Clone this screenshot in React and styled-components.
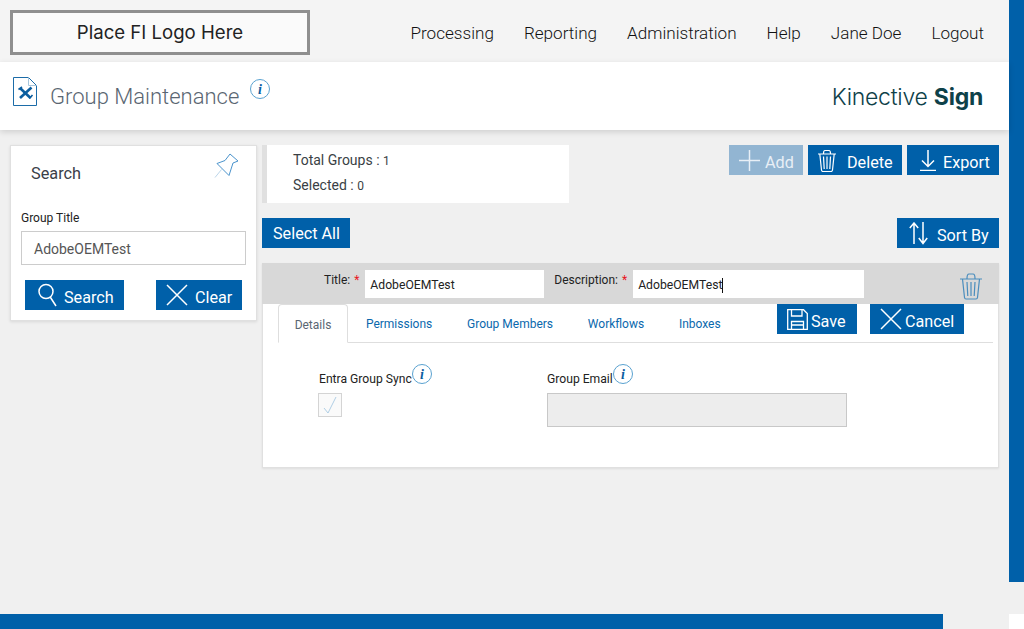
import React from "react";
import styled, { createGlobalStyle } from "styled-components";

const Global = createGlobalStyle`
  html, body { margin: 0; padding: 0; background: #f0f0f0; overflow: hidden; }
  body { font-family: Roboto, "Liberation Sans", sans-serif; }
  * { box-sizing: border-box; }
`;
const BLUE = "#0060a9";

const Page = styled.div`width: 1024px; height: 629px; display: flex; flex-direction: column;`;
const Upper = styled.div`height: 614px; display: flex; align-items: flex-start;`;
const Main = styled.div`width: 1009px; flex: none;`;
const ScrollV = styled.div`width: 15px; height: 582px; background: ${BLUE};`;
const Lower = styled.div`height: 15px; display: flex; justify-content: space-between;`;
const ScrollH = styled.div`width: 943px; background: ${BLUE};`;
const Corner = styled.div`width: 15px; background: #fff;`;

const TopBar = styled.header`height: 62px; background: #f4f4f4; display: flex; align-items: flex-start; justify-content: space-between; padding: 10px 25px 0 10px;`;
const Logo = styled.div`width: 300px; height: 45px; border: 3px solid #8f8f8f; background: #fafafa; display: flex; align-items: center; justify-content: center; font: 400 18.6px Inter, sans-serif; color: #222; padding-bottom: 1px;`;
const Nav = styled.nav`display: flex; gap: 30px; padding-top: 14px;`;
const NavItem = styled.a`font-size: 17.1px; font-weight: 300; line-height: 19px; color: #111;`;

const TitleBar = styled.div`height: 68px; background: #fff; box-shadow: 0 2px 6px rgba(0,0,0,.14); display: flex; justify-content: space-between; padding: 15px 26px 0 13px; position: relative;`;
const TitleLeft = styled.div`display: flex; align-items: flex-start;`;
const PageTitle = styled.h1`margin: 6px 11px 0 13px; font-size: 22px; line-height: 28px; font-weight: 300; color: #5a6672;`;
const Brand = styled.div`font: 300 23px/28px Inter, sans-serif; color: #0e4149; margin-top: 6px; letter-spacing: -.25px; b { font-weight: 700; }`;
const InfoWrap = styled.span`display: inline-flex; flex: none; margin-top: ${p => p.$top || 0}px;`;

const Content = styled.div`display: flex; gap: 5px; padding: 15px 10px 0;`;
const Side = styled.aside`width: 247px; height: 176px; flex: none; background: #fff; border: 1px solid #e0e0e0; box-shadow: 0 1px 3px rgba(0,0,0,.1); padding: 6px 10px 0;`;
const SideHead = styled.div`display: flex; justify-content: space-between; padding: 1px 6px 0 10px; height: 59px;`;
const SideTitle = styled.div`font-size: 16.3px; font-weight: 400; color: #3a4048; margin-top: 11px; line-height: 19px;`;
const Label = styled.label`display: block; font-size: 12px; line-height: 14px; color: #222;`;
const SearchInput = styled.div`width: 225px; height: 34px; margin-top: 6px; border: 1px solid #ccc; background: #fff; font-size: 14px; line-height: 34px; padding-left: 12px; color: #555;`;
const SideActions = styled.div`display: flex; justify-content: space-between; padding: 15px 4px 0;`;

const Btn = styled.button`height: 30px; border: 0; margin: 0; padding: 0 ${p => p.$pr || 10}px 0 ${p => p.$pl || 10}px; display: inline-flex; align-items: center; gap: ${p => p.$gap || 8}px; background: ${p => p.$off ? "#92b5d2" : BLUE}; color: ${p => p.$off ? "#e8eff6" : "#fff"}; font: 400 16.2px Roboto, sans-serif; width: ${p => p.$w}px; flex: none;
  span { position: relative; top: 2px; }`;
const PlainBtn = styled(Btn)`padding-left: 11px;`;

const Center = styled.main`width: 737px; flex: none;`;
const StatsRow = styled.div`display: flex; justify-content: space-between; align-items: flex-start;`;
const Stats = styled.div`width: 307px; height: 58px; background: #fff; border-left: 5px solid #e0e0e0; padding: 4px 0 0 26px; font-size: 14px; line-height: 23.6px; color: #3a3f45; b { font-weight: 400; font-size: 12px; }`;
const Actions = styled.div`display: flex; gap: 5px;`;
const SelectRow = styled.div`display: flex; justify-content: space-between; margin-top: 15px;`;

const Panel = styled.section`margin-top: 15px; height: 205px; background: #fff; border: 1px solid #e0e0e0; border-top: 0; box-shadow: 0 1px 2px rgba(0,0,0,.08);`;
const PanelHead = styled.div`height: 41px; background: #d8d8d8; display: flex; align-items: flex-start; padding: 7px 16px 0 62px; margin: 0 -1px 0 -1px;`;
const FieldLabel = styled.div`font-size: 12px; line-height: 14px; color: #222; margin-top: 3px; margin-right: 6px; white-space: nowrap; i { color: #e8141c; font-style: normal; margin-left: 1px; }`;
const HeadInput = styled.div`width: ${p => p.$w}px; height: 28px; background: #fff; font-size: 12.2px; line-height: 31px; padding-left: 5px; color: #222; margin-right: ${p => p.$mr}px; flex: none; display: flex;`;
const Caret = styled.span`width: 1px; height: 15px; background: #111; margin-top: 8px;`;
const TabRow = styled.div`height: 39px; margin: 0 5px 0 15px; border-bottom: 1px solid #dedede; display: flex; align-items: flex-start; justify-content: space-between;`;
const Tabs = styled.div`display: flex; height: 39px;`;
const Tab = styled.a`font-size: 12px; line-height: 14px; padding: 13px 17.4px 0; color: ${p => p.$on ? "#5a6672" : "#0a68ad"};
  ${p => p.$on && `background:#fff;border:1px solid #dedede;border-bottom:1px solid #fff;border-radius:4px 4px 0 0;height:39px;width:70px;padding:13px 0 0;text-align:center;margin-right:.5px;`}`;
const TabActions = styled.div`display: flex; gap: 13px; padding-right: 29px;`;
const Fields = styled.div`display: flex; padding: 21px 0 0 56px;`;
const SyncField = styled.div`width: 228px;`;
const FieldHead = styled.div`display: flex; align-items: flex-start; height: 29px; ${Label} { line-height: 14px; margin-top: 8px; font-size: 12.15px; }`;
const Check = styled.div`width: 24px; height: 24px; border: 1px solid #d4d4d4; background: #fafafa; display: flex; align-items: center; justify-content: center; margin-left: -1px;`;
const DisabledInput = styled.div`width: 300px; height: 34px; background: #ededed; border: 1px solid #c8c8c8;`;

const Info = ({ size = 20 }) => (
  <svg width={size} height={size} viewBox="0 0 20 20" fill="none">
    <circle cx="10" cy="10" r="9.5" stroke="#5aa2d0" strokeWidth="1" />
    <text x="10" y="14.5" textAnchor="middle" fontFamily="Liberation Serif, serif" fontStyle="italic" fontWeight="700" fontSize="14" fill="#0a5d9f">i</text>
  </svg>
);
const FileIcon = () => (
  <svg width="24" height="30" viewBox="0 0 24 30" fill="none" style={{ flex: "none" }}>
    <path d="M.5.5H15.5L23.5 8.5V28.5H.5Z" fill="#fff" stroke="#1c6ca8" />
    <path d="M15.5 .5V8.5H23.5" stroke="#a8c6dc" />
    <path d="M7.5 11.5L17.5 21" stroke="#0a5d9f" strokeWidth="2.6" />
    <path d="M18.5 10.5L7 21" stroke="#0a5d9f" strokeWidth="2.6" />
    <path d="M5.5 12.5L9 10M19.5 18L16.5 21.5" stroke="#0a5d9f" strokeWidth="1.6" />
  </svg>
);
const PinIcon = () => (
  <svg width="26" height="26" viewBox="0 0 26 26" fill="none">
    <path d="M7.5 16.5L1 24.5" stroke="#bcd6ea" strokeWidth="1" />
    <path d="M16 1L24 8L19 10L15 22.5L3 10.5L11 7.5Z" stroke="#4a93cc" strokeWidth="1" strokeLinejoin="miter" />
  </svg>
);
const Line = ({ w, h, d, color = "#fff", sw = 1.4 }) => (
  <svg width={w} height={h} viewBox={`0 0 ${w} ${h}`} fill="none" stroke={color} strokeWidth={sw} style={{ flex: "none" }}>
    <path d={d} />
  </svg>
);
const Ico = {
  Search: () => <Line w={21} h={24} sw={1.5} d="M13.5 14.5L19 23M16 8.5A7 7 0 1 1 2 8.5A7 7 0 1 1 16 8.5Z" />,
  X: () => <Line w={22} h={22} sw={1.5} d="M1 1L21 21M21 1L1 21" />,
  Plus: () => <Line w={21} h={21} sw={1.5} color="#e8eff6" d="M10.5 0V21M0 10.5H21" />,
  Trash: () => <Line w={18} h={23} sw={1.2} d="M0 5H18M5.5 4.5Q5.5 1.5 7 1.5H11Q12.5 1.5 12.5 4.5M1.8 5L3.5 21Q3.7 22.5 5 22.5H13Q14.3 22.5 14.5 21L16.2 5M5.5 7.5L6.2 20M9 7.5V20M12.5 7.5L11.8 20" />,
  Export: () => <Line w={16} h={21} sw={1.5} d="M8 0V16M2 10.5L8 16.5L14 10.5M0 20.5H16" />,
  Sort: () => <Line w={19} h={23} sw={1.5} d="M5 22V1M.8 6L5 1L9.2 6M14 0V21M9.8 16L14 21.5L18.2 16" />,
  Save: () => <Line w={21} h={21} sw={1.3} d="M.7.7H16.5L20.3 4.5V20.3H.7ZM4.5.7V7H15V.7M4.5 20.3V12.5H16.5V20.3M4.5 16H16.5" />,
};

const navItems = ["Processing", "Reporting", "Administration", "Help", "Jane Doe", "Logout"];
const tabs = ["Permissions", "Group Members", "Workflows", "Inboxes"];

export default function App() {
  return (
    <Page>
      <Global />
      <Upper>
        <Main>
          <TopBar>
            <Logo>Place FI Logo Here</Logo>
            <Nav>{navItems.map(n => <NavItem key={n}>{n}</NavItem>)}</Nav>
          </TopBar>
          <TitleBar>
            <TitleLeft>
              <FileIcon />
              <PageTitle>Group Maintenance</PageTitle>
              <InfoWrap $top={2}><Info /></InfoWrap>
            </TitleLeft>
            <Brand>Kinective <b>Sign</b></Brand>
          </TitleBar>
          <Content>
            <Side>
              <SideHead>
                <SideTitle>Search</SideTitle>
                <PinIcon />
              </SideHead>
              <Label>Group Title</Label>
              <SearchInput>AdobeOEMTest</SearchInput>
              <SideActions>
                <Btn $w={99} $pl={12} $gap={6}><Ico.Search /><span>Search</span></Btn>
                <Btn $w={86} $pl={10} $gap={7}><Ico.X /><span>Clear</span></Btn>
              </SideActions>
            </Side>
            <Center>
              <StatsRow>
                <Stats>
                  <div>Total Groups : <b>1</b></div>
                  <div>Selected : <b>0</b></div>
                </Stats>
                <Actions>
                  <Btn $off $w={74} $gap={5}><Ico.Plus /><span>Add</span></Btn>
                  <Btn $w={94} $gap={11}><Ico.Trash /><span>Delete</span></Btn>
                  <Btn $w={92} $pl={13} $gap={7}><Ico.Export /><span>Export</span></Btn>
                </Actions>
              </StatsRow>
              <SelectRow>
                <PlainBtn $w={88}>Select All</PlainBtn>
                <Btn $w={102} $pl={12} $gap={9}><Ico.Sort /><span>Sort By</span></Btn>
              </SelectRow>
              <Panel>
                <PanelHead>
                  <FieldLabel>Title: <i>*</i></FieldLabel>
                  <HeadInput $w={179} $mr={10}>AdobeOEMTest</HeadInput>
                  <FieldLabel>Description: <i>*</i></FieldLabel>
                  <HeadInput $w={231} $mr={96}>AdobeOEMTest<Caret /></HeadInput>
                  <InfoWrap $top={3}><Line w={22} h={27} sw={1.2} color="#4a8dbd" d="M0 6H22M7 5.5Q7 1 9 1H13Q15 1 15 5.5M2.5 6L4.5 24.5Q4.7 26 6 26H16Q17.3 26 17.5 24.5L19.5 6M7 9L7.8 23M11 9V23M15 9L14.2 23" /></InfoWrap>
                </PanelHead>
                <TabRow>
                  <Tabs>
                    <Tab $on>Details</Tab>
                    {tabs.map(t => <Tab key={t}>{t}</Tab>)}
                  </Tabs>
                  <TabActions>
                    <Btn $w={80} $pl={10} $gap={3}><Ico.Save /><span>Save</span></Btn>
                    <Btn $w={94} $pl={10} $gap={3}><Ico.X /><span>Cancel</span></Btn>
                  </TabActions>
                </TabRow>
                <Fields>
                  <SyncField>
                    <FieldHead><Label>Entra Group Sync</Label><Info /></FieldHead>
                    <Check><Line w={16} h={20} sw={.8} color="#9cc3de" d="M2 13L6 18L14 2" /></Check>
                  </SyncField>
                  <div>
                    <FieldHead><Label>Group Email</Label><Info /></FieldHead>
                    <DisabledInput />
                  </div>
                </Fields>
              </Panel>
            </Center>
          </Content>
        </Main>
        <ScrollV />
      </Upper>
      <Lower><ScrollH /><Corner /></Lower>
    </Page>
  );
}
